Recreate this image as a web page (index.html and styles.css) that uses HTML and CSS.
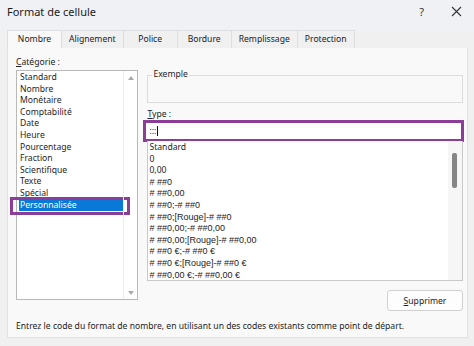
FILE: index.html
```html
<!DOCTYPE html>
<html lang="fr">
<head>
<meta charset="utf-8">
<title>Format de cellule</title>
<link rel="stylesheet" href="styles.css">
</head>
<body>
<div class="dialog">
  <div class="titlebar">
    <span class="title">Format de cellule</span>
    <span class="tb-btns">
      <span class="help">?</span>
      <svg class="close" width="11" height="11" viewBox="0 0 11 11"><path d="M1 1 L10 10 M10 1 L1 10" stroke="#333" stroke-width="1.1" fill="none"/></svg>
    </span>
  </div>
  <div class="tabs">
    <div class="tab active">Nombre</div>
    <div class="tab">Alignement</div>
    <div class="tab">Police</div>
    <div class="tab">Bordure</div>
    <div class="tab">Remplissage</div>
    <div class="tab">Protection</div>
  </div>
  <div class="panel">
    <div class="cols">
      <div class="left">
        <div class="label"><u>C</u>atégorie :</div>
        <div class="catlist">
          <ul class="items">
            <li>Standard</li>
            <li>Nombre</li>
            <li>Monétaire</li>
            <li>Comptabilité</li>
            <li>Date</li>
            <li>Heure</li>
            <li>Pourcentage</li>
            <li>Fraction</li>
            <li>Scientifique</li>
            <li>Texte</li>
            <li>Spécial</li>
            <li class="sel">Personnalisée<span class="mark"></span></li>
          </ul>
          <div class="vscroll">
            <span class="arr up"></span>
            <span class="arr down"></span>
          </div>
        </div>
      </div>
      <div class="right">
        <div class="group">
          <span class="legend">Exemple</span>
        </div>
        <div class="label type-label"><u>T</u>ype :</div>
        <div class="typebox">:::<span class="caret"></span></div>
        <div class="fmtlist">
          <ul class="items fmt">
            <li>Standard</li>
            <li>0</li>
            <li>0,00</li>
            <li># ##0</li>
            <li># ##0,00</li>
            <li># ##0;-# ##0</li>
            <li># ##0;[Rouge]-# ##0</li>
            <li># ##0,00;-# ##0,00</li>
            <li># ##0,00;[Rouge]-# ##0,00</li>
            <li># ##0 €;-# ##0 €</li>
            <li># ##0 €;[Rouge]-# ##0 €</li>
            <li># ##0,00 €;-# ##0,00 €</li>
          </ul>
          <div class="vscroll2"><span class="thumb"></span></div>
        </div>
        <div class="btnrow"><button class="btn"><u>S</u>upprimer</button></div>
      </div>
    </div>
    <div class="hint">Entrez le code du format de nombre, en utilisant un des codes existants comme point de départ.</div>
  </div>
</div>
</body>
</html>
```

FILE: styles.css
```css
* { box-sizing: border-box; }
html, body { margin: 0; padding: 0; }
body {
  width: 474px;
  height: 346px;
  overflow: hidden;
  background: #f0f0f0;
  font-family: "Noto Sans", "Open Sans", sans-serif;
  font-size: 8.6px;
  color: #1e1e1e;
}
.dialog { width: 474px; height: 346px; display: flex; flex-direction: column; }
.titlebar {
  height: 30px;
  display: flex;
  align-items: center;
  justify-content: space-between;
  padding: 0 12px 8px 7px;
  background: #eff1f5;
}
.title { font-size: 11px; color: #1b1b1b; }
.tb-btns { display: flex; align-items: center; gap: 27px; }
.help { font-size: 11px; color: #333; }
.close { display: block; }
.tabs { display: flex; height: 18px; margin-left: 7px; }
.tab {
  min-width: 54px;
  padding: 0 7px;
  text-align: center;
  line-height: 17px;
  border: 1px solid #dedede;
  border-bottom: none;
  border-left: none;
  background: #f0f0f0;
  color: #222;
}
.tab.active { background: #f9f9f9; border-left: 1px solid #dedede; min-width: 55px; }
.panel {
  margin: 0 6px 0 7px;
  height: 290px;
  background: #f9f9f9;
  border: 1px solid #e2e2e2;
  border-top: none;
  padding: 9px 4px 0 8px;
  display: flex;
  flex-direction: column;
}
.cols { display: flex; gap: 9px; }
.left { width: 123px; }
.label { height: 13px; line-height: 11px; color: #222; }
.catlist {
  height: 230px;
  border: 1px solid #b9b9b9;
  background: #fff;
  display: flex;
}
.items { list-style: none; margin: 0; padding: 0; flex: 1; }
.catlist .items { padding: 1px 0 0 3px; }
.items li { height: 11.6px; line-height: 11.6px; white-space: nowrap; }
.items li.sel {
  position: relative;
  background: #0a78d7;
  color: #fff;
  margin-left: -1px;
  padding-left: 1px;
}
.mark {
  position: absolute;
  left: -9px;
  right: -7px;
  top: -3px;
  bottom: -4px;
  border: 3px solid #8c3d98;
}
.vscroll {
  width: 14px;
  border-left: 1px solid #ededed;
  position: relative;
}
.arr { position: absolute; left: 4px; width: 0; height: 0; border-left: 3px solid transparent; border-right: 3px solid transparent; }
.arr.up { top: 5px; border-bottom: 4px solid #a9a9a9; }
.arr.down { bottom: 4px; border-top: 4px solid #a9a9a9; }
.right { width: 317px; display: flex; flex-direction: column; }
.group {
  position: relative;
  margin-top: 18px;
  height: 28px;
  border: 1px solid #dcdcdc;
}
.legend {
  position: absolute;
  top: -7px;
  left: 4px;
  padding: 0 1px;
  background: #f9f9f9;
  line-height: 11px;
}
.type-label { margin-top: 6px; height: 11px; }
.typebox {
  margin: 0 -1px 0 -4px;
  height: 22px;
  border: 3px solid #8c3d98;
  background: #fff;
  padding-left: 3px;
  line-height: 15px;
  display: flex;
  align-items: center;
}
.caret { display: inline-block; width: 1px; height: 10px; background: #111; margin-left: 1px; }
.fmtlist {
  height: 140px;
  margin-top: -1px;
  border: 1px solid #c9c9c9;
  border-top: none;
  background: #fff;
  display: flex;
}
.fmt { padding: 1px 0 0 1px; font-family: "Liberation Sans", Arial, sans-serif; font-size: 9px; }
.fmt li:first-child, .fmt li:nth-child(2), .fmt li:nth-child(3) { font-family: "Noto Sans", sans-serif; font-size: 8.6px; }
.vscroll2 { width: 14px; background: #f6f6f6; position: relative; }
.thumb { position: absolute; left: 4px; top: 12px; width: 5px; height: 35px; background: #858585; border-radius: 2px; }
.btnrow { display: flex; justify-content: flex-end; margin-top: 9px; }
.btn {
  width: 76px;
  height: 21px;
  font: inherit;
  color: #222;
  background: #fdfdfd;
  border: 1px solid #d0d0d0;
  border-radius: 3px;
  padding: 0;
}
.hint { margin-top: 9px; line-height: 12px; color: #222; }
```
